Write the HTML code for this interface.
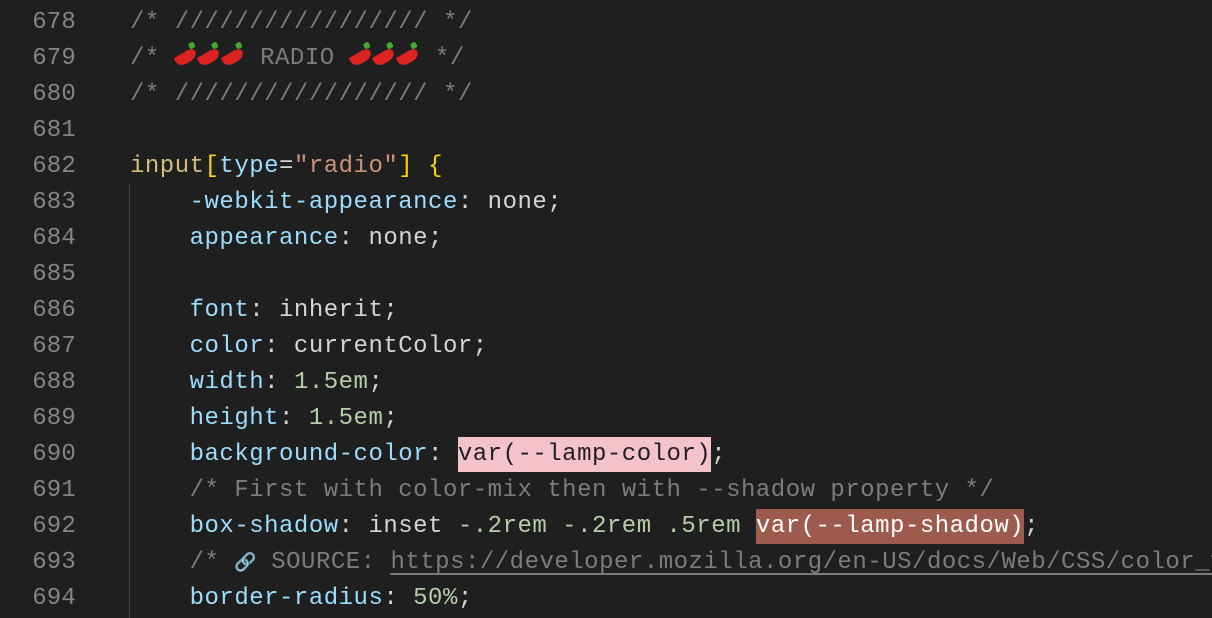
<!DOCTYPE html>
<html><head><meta charset="utf-8"><style>
html,body{margin:0;padding:0;background:#1f1f1f;width:1212px;height:618px;overflow:hidden}
.l{position:absolute;left:0;height:36px;line-height:36px;width:1212px;overflow:hidden;white-space:pre;font-family:"Liberation Mono","DejaVu Sans Mono",monospace;font-size:24px;letter-spacing:0.5px;color:#d4d4d4;margin-top:2px}
.n{position:absolute;left:0;width:76px;text-align:right;color:#858585;letter-spacing:0.2px}
.c{position:absolute;left:130px}
.cm{color:#7c7c7c}
.p{color:#9cdcfe}.v{color:#d4d4d4}.num{color:#b5cea8}
.sel{color:#d7ba7d}.br{color:#ffd700}.s{color:#ce9178}
.h1{background:#f4c2cb;color:#1f1f1f;padding:4px 0}
.h2{background:#9c5b4d;color:#fff;padding:4px 0}
.pep{display:inline-block;width:22px;height:11px;margin-right:1.5px;background:#d22;border-radius:0 8px 10px 10px / 0 5px 8px 8px;transform:rotate(-30deg);vertical-align:middle;position:relative}
.pep:after{content:"";position:absolute;right:-3px;top:-5px;width:6px;height:6px;background:#4a3;border-radius:2px}
.lnk{display:inline-block;width:22px;text-align:center;color:#aaa;font-size:18px;letter-spacing:0}
.u{text-decoration:underline;text-underline-offset:5px}
.guide{position:absolute;left:129px;top:184px;width:1px;height:434px;background:#444}
</style></head><body>
<div class="guide"></div>
<div class="l" style="top:3px"><span class="n">678</span><span class="c cm">/* ///////////////// */</span></div>
<div class="l" style="top:39px"><span class="n">679</span><span class="c cm">/* <span class="pep"></span><span class="pep"></span><span class="pep"></span> RADIO <span class="pep"></span><span class="pep"></span><span class="pep"></span> */</span></div>
<div class="l" style="top:75px"><span class="n">680</span><span class="c cm">/* ///////////////// */</span></div>
<div class="l" style="top:111px"><span class="n">681</span></div>
<div class="l" style="top:147px"><span class="n">682</span><span class="c"><span class="sel">input</span><span class="br">[</span><span class="p">type</span>=<span class="s">"radio"</span><span class="br">]</span> <span class="br">{</span></span></div>
<div class="l" style="top:183px"><span class="n">683</span><span class="c">    <span class="p">-webkit-appearance</span>: none;</span></div>
<div class="l" style="top:219px"><span class="n">684</span><span class="c">    <span class="p">appearance</span>: none;</span></div>
<div class="l" style="top:255px"><span class="n">685</span></div>
<div class="l" style="top:291px"><span class="n">686</span><span class="c">    <span class="p">font</span>: inherit;</span></div>
<div class="l" style="top:327px"><span class="n">687</span><span class="c">    <span class="p">color</span>: currentColor;</span></div>
<div class="l" style="top:363px"><span class="n">688</span><span class="c">    <span class="p">width</span>: <span class="num">1.5em</span>;</span></div>
<div class="l" style="top:399px"><span class="n">689</span><span class="c">    <span class="p">height</span>: <span class="num">1.5em</span>;</span></div>
<div class="l" style="top:435px"><span class="n">690</span><span class="c">    <span class="p">background-color</span>: <span class="h1">var(--lamp-color)</span>;</span></div>
<div class="l" style="top:471px"><span class="n">691</span><span class="c cm">    /* First with color-mix then with --shadow property */</span></div>
<div class="l" style="top:507px"><span class="n">692</span><span class="c">    <span class="p">box-shadow</span>: inset <span class="num">-.2rem -.2rem .5rem</span> <span class="h2">var(--lamp-shadow)</span>;</span></div>
<div class="l" style="top:543px"><span class="n">693</span><span class="c cm">    /* <span class="lnk">🔗</span> SOURCE: <span class="u">https://developer.mozilla.org/en-US/docs/Web/CSS/color_v</span></span></div>
<div class="l" style="top:579px"><span class="n">694</span><span class="c">    <span class="p">border-radius</span>: <span class="num">50%</span>;</span></div>
</body></html>
